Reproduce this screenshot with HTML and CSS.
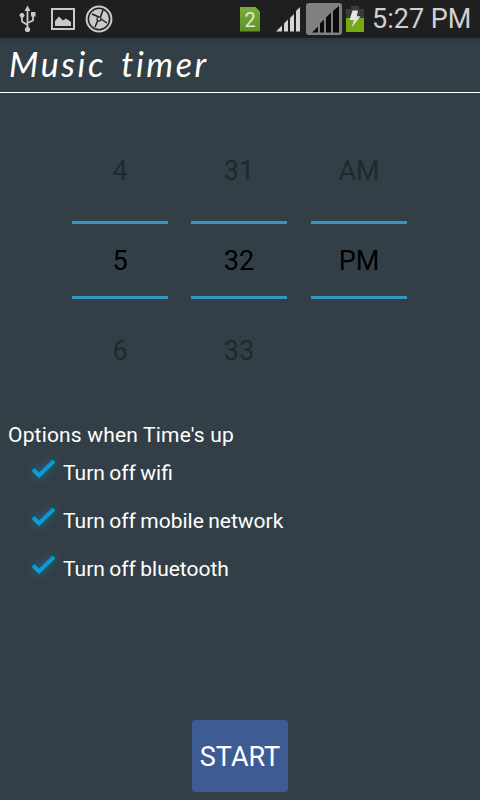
FILE: index.html
```
<!DOCTYPE html>
<html lang="en">
<head>
    <meta charset="UTF-8">
    <meta name="viewport" content="width=device-width, initial-scale=1.0">
    <title>Music timer</title>
    <link rel="stylesheet" href="styles.css">
</head>
<body>

    <div class="status-bar">
        <svg class="usb" width="18" height="28" viewBox="0 0 18 28">
            <path d="M8.5 4V24M8.5 20L3 16.5V11M8.5 18L14 15.5V10" fill="none" stroke="#c9c9c9" stroke-width="1.8"/>
            <path d="M8.5 0.5L11.5 6H5.5Z" fill="#c9c9c9"/>
            <circle cx="3" cy="10.3" r="2.4" fill="#c9c9c9"/>
            <rect x="12" y="7" width="4.5" height="4.5" fill="#c9c9c9"/>
            <circle cx="8.5" cy="24.5" r="2.6" fill="#c9c9c9"/>
        </svg>
        <svg class="gallery" width="24" height="22" viewBox="0 0 24 22">
            <rect x="1" y="1" width="22" height="20" fill="none" stroke="#c9c9c9" stroke-width="2"/>
            <path d="M4 18V13L8 8.5L12 12.5L15 10.5L20 14V18Z" fill="#c9c9c9"/>
        </svg>
        <svg class="disc" width="28" height="28" viewBox="0 0 28 28">
            <circle cx="14" cy="14" r="12.4" fill="none" stroke="#c9c9c9" stroke-width="2"/>
            <circle cx="14" cy="14" r="9.9" fill="#c9c9c9"/>
            <path d="M14 12L7 9M15 13L18 5M16 14L22 18M13 15L10 22" stroke="#1f1f1f" stroke-width="1.5"/>
            <circle cx="14" cy="14" r="2.6" fill="#1f1f1f"/>
            <circle cx="14" cy="14" r="1.4" fill="#c9c9c9"/>
        </svg>
        <div class="sim">2</div>
        <svg class="signal" width="25" height="25" viewBox="0 0 25 25">
            <path d="M0 24.5L6 18.5V24.5ZM8 24.5V16.5L12 12.5V24.5ZM14 24.5V11L18 7V24.5ZM20 24.5V4L24 0V24.5Z" fill="#d4d4d4"/>
        </svg>
        <svg class="signal-box" width="36" height="32" viewBox="0 0 36 32">
            <rect width="36" height="32" rx="3" fill="#808080"/>
            <path d="M6 29.5L12 23.5V29.5ZM14 29.5V20.5L18 16.5V29.5ZM20 29.5V14.5L25 9.5V29.5ZM27 29.5V8L33 3V29.5Z" fill="#0b0b0b"/>
        </svg>
        <svg class="battery" width="18" height="26" viewBox="0 0 18 26">
            <path d="M5 0H13V3H18V26H0V3H5Z" fill="#3b3b3b"/>
            <rect y="12" width="18" height="14" fill="#78a812"/>
            <path d="M6.5 4.5H12L10.8 10.2H14.5L5.6 21.5L8 14H3.5Z" fill="#e4e4e4"/>
        </svg>
        <span class="clock">5:27 PM</span>
    </div>

    <div class="header">
        <h1>Music timer</h1>
    </div>

    <div class="time-picker">
        <div class="picker">
            <div class="near">4</div>
            <div class="selected">5</div>
            <div class="near">6</div>
        </div>
        <div class="divider">:</div>
        <div class="picker">
            <div class="near">31</div>
            <div class="selected">32</div>
            <div class="near">33</div>
        </div>
        <div class="picker period">
            <div class="near">AM</div>
            <div class="selected">PM</div>
            <div class="near"></div>
        </div>
    </div>

    <div class="options">
        <div class="options-title">Options when Time's up</div>
        <label class="option">
            <svg class="check" width="32" height="32" viewBox="0 0 32 32"><path d="M6 16.5L12 22.5L27 8"/></svg>
            <span>Turn off wifi</span>
        </label>
        <label class="option">
            <svg class="check" width="32" height="32" viewBox="0 0 32 32"><path d="M6 16.5L12 22.5L27 8"/></svg>
            <span>Turn off mobile network</span>
        </label>
        <label class="option">
            <svg class="check" width="32" height="32" viewBox="0 0 32 32"><path d="M6 16.5L12 22.5L27 8"/></svg>
            <span>Turn off bluetooth</span>
        </label>
    </div>

    <button class="start">START</button>

</body>
</html>
```
FILE: styles.css
```
* {
    box-sizing: border-box;
}
body {
    display: flex;
    flex-direction: column;
    height: 800px;
    margin: 0;
    background-color: #333f47;
    color: white;
    font-family: Roboto, sans-serif;
    overflow: hidden;
}
.status-bar {
    display: flex;
    align-items: center;
    height: 38px;
    padding-left: 19px;
    background-color: #1f1f1f;
}
.status-bar svg {
    flex: none;
}
.gallery {
    margin-left: 14px;
}
.disc {
    margin-left: 10px;
}
.sim {
    width: 20px;
    height: 25px;
    margin-left: 127px;
    background: linear-gradient(#79ad37, #5c9428);
    clip-path: polygon(0 0, 15px 0, 100% 5px, 100% 100%, 0 100%);
    color: #e2e8dc;
    font-size: 20px;
    line-height: 27px;
    text-align: center;
}
.signal {
    margin-left: 16px;
}
.signal-box {
    margin-left: 5px;
}
.battery {
    margin-left: 4px;
}
.clock {
    margin-left: 8px;
    color: #d0d0d0;
    font-size: 27px;
    line-height: 38px;
    white-space: nowrap;
}
.header {
    height: 55px;
    border-bottom: 1px solid white;
    background: linear-gradient(#2c363d, #333f47 5px);
}
h1 {
    margin: 0;
    padding-left: 9px;
    font-family: "Segoe Print", "Bradley Hand", Lato, sans-serif;
    font-size: 34px;
    font-style: italic;
    font-weight: normal;
    letter-spacing: 2.6px;
    line-height: 51px;
    word-spacing: 5px;
}
.time-picker {
    display: flex;
    height: 270px;
    margin-top: 33px;
    padding-left: 72px;
    font-size: 27px;
    text-align: center;
}
.picker {
    width: 96px;
}
.period {
    margin-left: 24px;
}
.near {
    height: 95px;
    color: #20292f;
    line-height: 91px;
}
.selected {
    height: 78px;
    border-top: 3px solid #3398c0;
    border-bottom: 3px solid #3398c0;
    color: black;
    line-height: 74px;
}
.selected + .near {
    line-height: 104px;
}
.divider {
    width: 23px;
    color: #453f47;
    font-size: 18px;
    line-height: 268px;
}
.options {
    padding: 24px 8px 0;
    font-size: 21px;
}
.options-title {
    height: 29px;
    letter-spacing: 0.18px;
    line-height: 30px;
}
.option {
    display: flex;
    height: 48px;
    padding-left: 19px;
}
.option span {
    margin-left: 4px;
    line-height: 48px;
    word-spacing: -0.8px;
}
.check {
    margin-top: 4px;
    fill: none;
    stroke: #099bd2;
    stroke-width: 4;
    filter: drop-shadow(0 0 4px rgba(0, 155, 215, 0.6));
}
.start {
    width: 96px;
    height: 72px;
    margin: auto auto 8px;
    padding: 2px 0 0;
    border: none;
    border-radius: 4px;
    background-color: #3e5c93;
    color: white;
    font-family: Roboto, sans-serif;
    font-size: 27px;
}
```
